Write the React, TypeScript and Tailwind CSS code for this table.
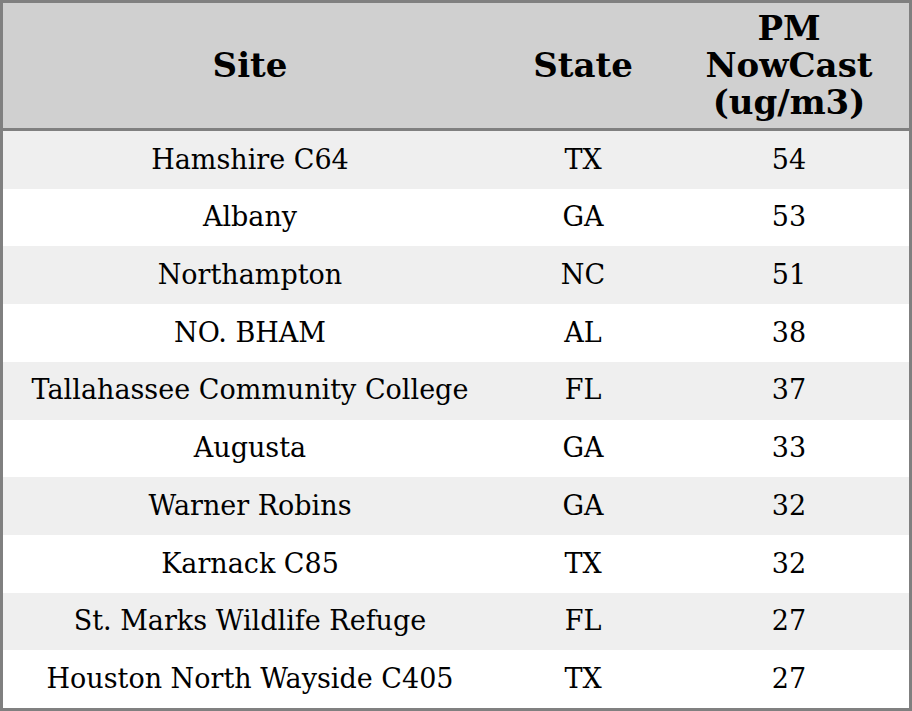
const rows = [
  { site: 'Hamshire C64', state: 'TX', pm: 54 },
  { site: 'Albany', state: 'GA', pm: 53 },
  { site: 'Northampton', state: 'NC', pm: 51 },
  { site: 'NO. BHAM', state: 'AL', pm: 38 },
  { site: 'Tallahassee Community College', state: 'FL', pm: 37 },
  { site: 'Augusta', state: 'GA', pm: 33 },
  { site: 'Warner Robins', state: 'GA', pm: 32 },
  { site: 'Karnack C85', state: 'TX', pm: 32 },
  { site: 'St. Marks Wildlife Refuge', state: 'FL', pm: 27 },
  { site: 'Houston North Wayside C405', state: 'TX', pm: 27 },
]

export default function App() {
  return (
    <div
      className="w-[912px] h-[711px] border-[3px] border-[#808080] bg-white text-black flex flex-col"
      style={{ fontFamily: '"DejaVu Serif", serif' }}
    >
      <div className="grid grid-cols-[494px_172px_240px] h-[128px] shrink-0 bg-[#d0d0d0] border-b-[3px] border-[#808080] text-[34px] font-bold leading-[37px]">
        <div className="flex items-center justify-center text-center">Site</div>
        <div className="flex items-center justify-center text-center">State</div>
        <div className="flex items-center justify-center text-center">
          PM
          <br />
          NowCast
          <br />
          (ug/m3)
        </div>
      </div>

      <div className="flex-1 flex flex-col">
        {rows.map((r, i) => (
          <div
            key={r.site}
            className={`flex-1 grid grid-cols-[494px_172px_240px] items-center text-[27px] ${
              i % 2 === 0 ? 'bg-[#efefef]' : 'bg-white'
            }`}
          >
            <div className="text-center">{r.site}</div>
            <div className="text-center">{r.state}</div>
            <div className="text-center">{r.pm}</div>
          </div>
        ))}
      </div>
    </div>
  )
}
